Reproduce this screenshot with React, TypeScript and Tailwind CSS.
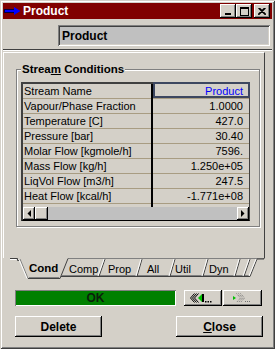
const rows: [string, string][] = [
  ['Stream Name', 'Product'],
  ['Vapour/Phase Fraction', '1.0000'],
  ['Temperature [C]', '427.0'],
  ['Pressure [bar]', '30.40'],
  ['Molar Flow [kgmole/h]', '7596.'],
  ['Mass Flow [kg/h]', '1.250e+05'],
  ['LiqVol Flow [m3/h]', '247.5'],
  ['Heat Flow [kcal/h]', '-1.771e+08'],
]

const tabs = [
  { label: 'Cond', w: 'w-[40px]', active: true },
  { label: 'Comp', w: 'w-[39px]' },
  { label: 'Prop', w: 'w-[39px]' },
  { label: 'All', w: 'w-[28px]' },
  { label: 'Util', w: 'w-[34px]' },
  { label: 'Dyn', w: 'w-[34px]' },
]

const raised =
  'bg-[#d4d0c8] shadow-[inset_-1px_-1px_0_#000000,inset_1px_1px_0_#ffffff,inset_-2px_-2px_0_#808080,inset_2px_2px_0_#d4d0c8]'

function TitleButton({ children }: { children: React.ReactNode }) {
  return <div className={`flex h-[14px] w-[16px] items-center justify-center ${raised}`}>{children}</div>
}

function TitleBar() {
  return (
    <div className="flex h-[16px] items-center bg-[#800000] pl-[1px] pr-[2px]">
      <svg width="17" height="8" viewBox="0 0 17 8">
        <rect x="0.5" y="2.5" width="10" height="3" fill="#0000ff" stroke="#000040" />
        <polygon points="10,0 16.5,4 10,8" fill="#0000ff" />
      </svg>
      <span className="ml-[2px] text-[12px] font-bold leading-none text-white">Product</span>
      <div className="ml-auto flex">
        <TitleButton>
          <svg width="8" height="8" viewBox="0 0 8 8">
            <rect x="1" y="6" width="6" height="2" fill="#000" />
          </svg>
        </TitleButton>
        <TitleButton>
          <svg width="9" height="9" viewBox="0 0 9 9">
            <rect x="0.5" y="0.5" width="8" height="8" fill="none" stroke="#000" />
            <rect x="0" y="0" width="9" height="2" fill="#000" />
          </svg>
        </TitleButton>
        <div className="ml-[2px]">
          <TitleButton>
            <svg width="8" height="7" viewBox="0 0 8 7">
              <path d="M0.5 0 L7.5 7 M7.5 0 L0.5 7 M1.5 0 L8 6.5 M6.5 0 L0 6.5" stroke="#000" strokeWidth="1.1" />
            </svg>
          </TitleButton>
        </div>
      </div>
    </div>
  )
}

function ScrollBtn({ dir }: { dir: 'l' | 'r' }) {
  return (
    <div className={`flex h-[13px] w-[12px] items-center justify-center ${raised}`}>
      <svg width="4" height="7" viewBox="0 0 4 7">
        {dir === 'l' ? <polygon points="4,0 0.5,3.5 4,7" fill="#000" /> : <polygon points="0,0 3.5,3.5 0,7" fill="#000" />}
      </svg>
    </div>
  )
}

function StreamTable() {
  return (
    <div className="w-[229px] border-l-2 border-t-2 border-b border-r border-l-[#404040] border-t-[#404040] border-b-[#000000] border-r-[#404040] bg-[#d4d0c8]">
      {rows.map(([name, value], i) => (
        <div key={name} className="flex h-[15px]">
          <div className="flex w-[128px] items-center border-b border-[#a89c82] pl-[1px] leading-none">{name}</div>
          <div className="w-[2px] bg-black" />
          <div className="relative flex w-[96px] items-center justify-end border-b border-[#a89c82] pr-[6px] leading-none">
            <span className={i === 0 ? 'text-[#0000ff]' : ''}>{value}</span>
            {i === 0 ? <div className="absolute -top-[2px] -right-[1px] bottom-0 left-0 border-2 border-[#3d4760]" /> : null}
          </div>
        </div>
      ))}
      <div className="flex h-[3px]">
        <div className="w-[128px]" />
        <div className="w-[2px] bg-black" />
      </div>
      <div className="flex h-[13px]">
        <ScrollBtn dir="l" />
        <div className={`h-[13px] w-[13px] ${raised}`} />
        <div className="flex-1 bg-[#c0c0c0]" />
        <ScrollBtn dir="r" />
      </div>
    </div>
  )
}

function TabStrip() {
  const slashes: [number, number][] = [
    [96, 102],
    [134, 139],
    [167, 172],
    [200, 205],
    [232, 237],
    [241, 247],
    [247, 254],
  ]
  return (
    <div className="relative h-[22px]">
      <svg className="absolute left-0 top-0" width="269" height="22" viewBox="0 0 269 22">
        <path d="M7 0.5 H14.5 V2.5 H17" stroke="#404040" fill="none" />
        <path d="M7 1.5 H13.5" stroke="#ffffff" fill="none" />
        <path d="M65 0.5 H261" stroke="#808080" fill="none" />
        <path d="M17 1 L25 20.5" stroke="#808080" fill="none" />
        <path d="M16 1.5 L24 20.5" stroke="#ffffff" fill="none" />
        <path d="M25 20.5 H57" stroke="#404040" fill="none" />
        <path d="M26 19.5 H56" stroke="#808080" fill="none" />
        <path d="M57 20.5 L65 0.5" stroke="#404040" fill="none" />
        <path d="M58 18.5 H247" stroke="#404040" fill="none" />
        <path d="M59 17.5 H246" stroke="#808080" fill="none" />
        {slashes.map(([b, t]) => (
          <g key={b}>
            <path d={`M${b} 18.5 L${t} 1`} stroke="#404040" fill="none" />
            <path d={`M${b - 1} 18 L${t - 1} 1`} stroke="#ffffff" fill="none" />
          </g>
        ))}
        <path d="M254 1 H261 V0" stroke="#404040" fill="none" />
      </svg>
      <div className="relative flex h-full items-center pl-[26px]">
        {tabs.map((t) => (
          <div
            key={t.label}
            className={`${t.w} leading-none ${t.active ? 'text-[11.5px] font-bold' : 'text-[11px]'}`}
          >
            {t.label}
          </div>
        ))}
      </div>
    </div>
  )
}

function NavButtons() {
  return (
    <div className="ml-[8px] flex gap-[1px]">
      <div className={`flex h-[16px] w-[38px] items-center pl-[6px] ${raised}`}>
        <svg width="22" height="10" viewBox="0 0 22 10">
          <polyline points="4.5,0.5 0.5,5 4.5,9.5" fill="none" stroke="#000" />
          <polyline points="6.5,0.5 2.5,5 6.5,9.5" fill="none" stroke="#000" />
          <polyline points="8.5,0.5 4.5,5 8.5,9.5" fill="none" stroke="#000" />
          <polygon points="12,1 8,5 12,9" fill="#00c000" />
          <rect x="12" y="1" width="2" height="8" fill="#000" />
          <rect x="15" y="8" width="1.5" height="1.5" fill="#000" />
          <rect x="17.5" y="8" width="1.5" height="1.5" fill="#000" />
          <rect x="20" y="8" width="1.5" height="1.5" fill="#000" />
        </svg>
      </div>
      <div className={`flex h-[16px] w-[39px] items-center pl-[9px] ${raised}`}>
        <svg width="20" height="10" viewBox="0 0 20 10">
          <polygon points="1,3 4,5 1,7" fill="#00c000" />
          <polyline points="4.5,0.5 8.5,5 4.5,9.5" fill="none" stroke="#707070" strokeDasharray="1 1" />
          <polyline points="6.5,0.5 10.5,5 6.5,9.5" fill="none" stroke="#707070" strokeDasharray="1 1" />
          <polyline points="8.5,0.5 12.5,5 8.5,9.5" fill="none" stroke="#707070" strokeDasharray="1 1" />
          <rect x="13" y="8" width="1" height="1" fill="#707070" />
          <rect x="15" y="8" width="1" height="1" fill="#707070" />
          <rect x="17" y="8" width="1" height="1" fill="#707070" />
        </svg>
      </div>
    </div>
  )
}

export default function App() {
  return (
    <div className="h-[349px] w-[275px] bg-[#d4d0c8] p-[3px] font-['Liberation_Sans',Arial,sans-serif] text-[11px] text-black shadow-[inset_1px_1px_0_#d4d0c8,inset_-1px_-1px_0_#404040,inset_2px_2px_0_#ffffff,inset_-2px_-2px_0_#808080]">
      <TitleBar />

      <div className="mt-[6px] flex">
        <div className="ml-[55px] flex h-[21px] w-[212px] items-center bg-[#c0c0c0] pl-[4px] text-[12px] font-bold shadow-[inset_1px_1px_0_#808080,inset_-1px_-1px_0_#ffffff,inset_2px_2px_0_#404040,inset_-2px_-2px_0_#d4d0c8]">
          Product
        </div>
      </div>

      <div className="mt-[3px] h-[2px] border-t border-b border-t-[#404040] border-b-[#ffffff]" />

      <div className="mt-[1px] h-[206px] w-[262px] border-l border-t border-r border-l-white border-t-white border-r-[#404040] pl-[12px] pt-[16px]">
        <div className="relative h-[158px] w-[244px] border border-[#808080] pl-[4px] pt-[12px] shadow-[inset_1px_1px_0_#ffffff,1px_1px_0_#ffffff]">
          <div className="absolute -top-[7px] left-[4px] bg-[#d4d0c8] px-[1px] text-[11.5px] font-bold leading-[13px]">
            Strea<span className="underline">m</span> Conditions
          </div>
          <StreamTable />
        </div>
      </div>

      <TabStrip />

      <div className="mt-[10px] flex h-[16px] pl-[12px]">
        <div className="flex h-[16px] w-[161px] items-center justify-center bg-[#008000] text-[12px] font-bold text-[#0b1f0b] shadow-[inset_1px_1px_0_#808080,inset_-1px_-1px_0_#ffffff]">
          OK
        </div>
        <NavButtons />
      </div>

      <div className="mt-[10px] flex pl-[12px]">
        <div className={`flex h-[21px] w-[87px] items-center justify-center text-[12px] font-bold ${raised}`}>Delete</div>
        <div className={`ml-[74px] flex h-[21px] w-[87px] items-center justify-center text-[12px] font-bold ${raised}`}>
          <span className="underline">C</span>lose
        </div>
      </div>
    </div>
  )
}
